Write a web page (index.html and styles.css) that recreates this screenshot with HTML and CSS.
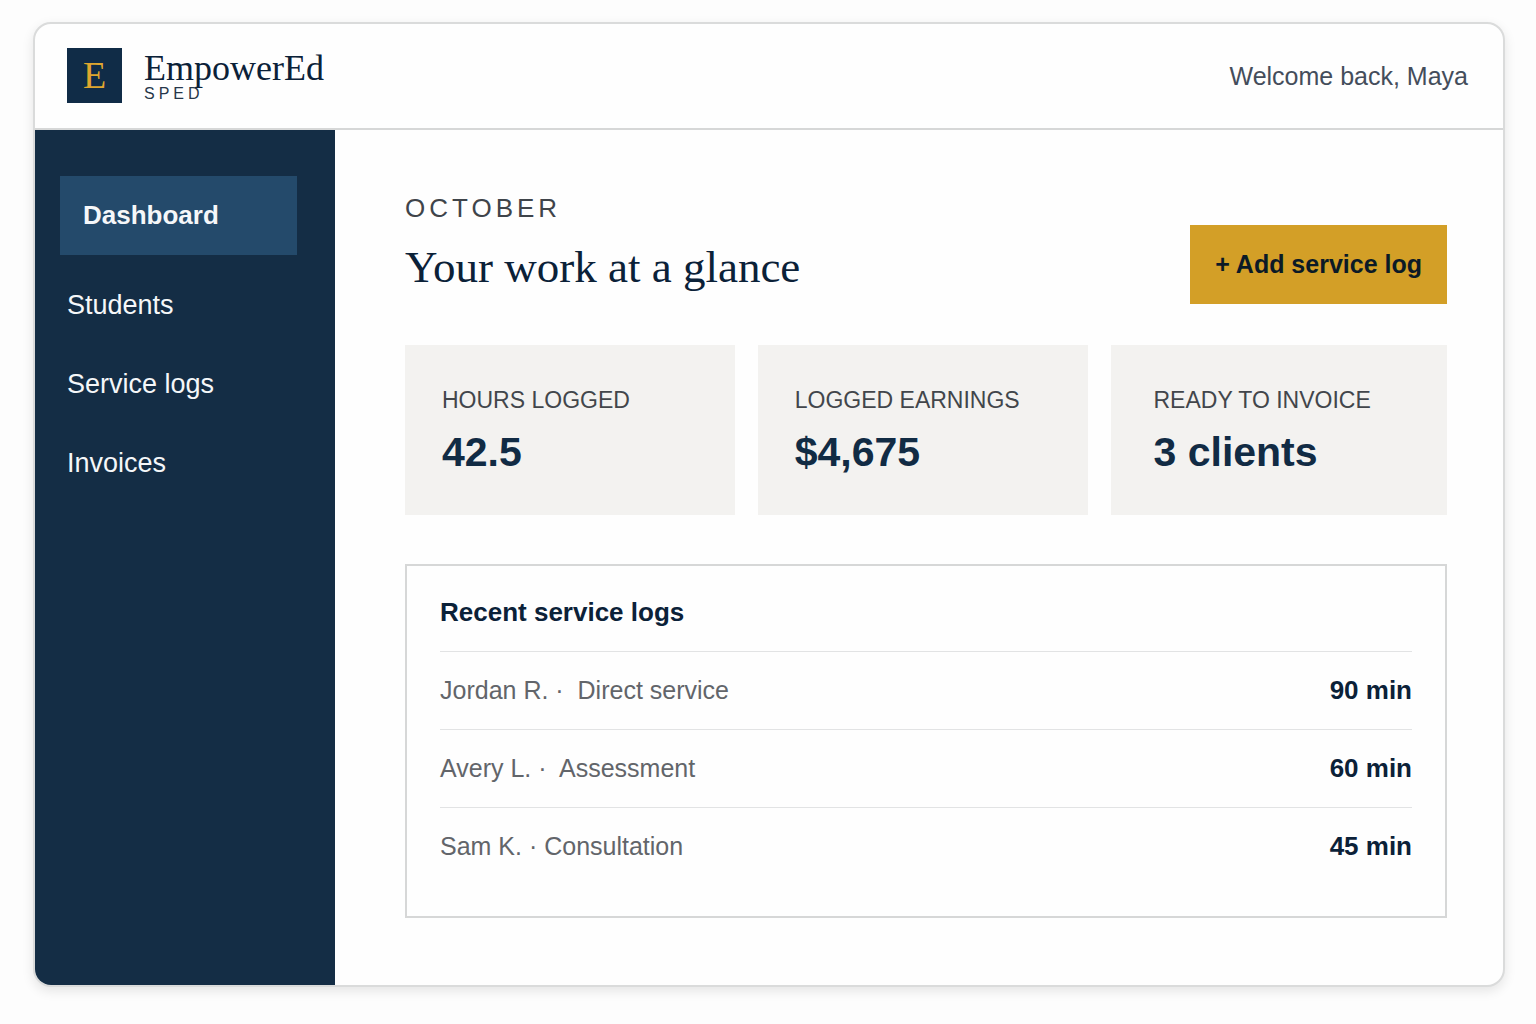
FILE: index.html
```html
<!DOCTYPE html>
<html lang="en">
<head>
    <meta charset="UTF-8">
    <meta name="viewport" content="width=device-width, initial-scale=1.0">
    <title>EmpowerEd SPED - Dashboard</title>
    <link rel="stylesheet" href="styles.css">
</head>
<body>
    <div class="app">
        <header class="header">
            <div class="brand">
                <div class="logo">E</div>
                <div class="brand-text">
                    <span class="brand-name">EmpowerEd</span>
                    <span class="brand-sub">SPED</span>
                </div>
            </div>
            <div class="welcome">Welcome back, Maya</div>
        </header>

        <div class="layout">
            <nav class="sidebar">
                <a class="nav-link active" href="#dashboard">Dashboard</a>
                <a class="nav-link" href="#students">Students</a>
                <a class="nav-link" href="#logs">Service logs</a>
                <a class="nav-link" href="#invoices">Invoices</a>
            </nav>

            <main class="content">
                <div class="page-head">
                    <div>
                        <div class="month">OCTOBER</div>
                        <h1 class="page-title">Your work at a glance</h1>
                    </div>
                    <button class="add-button" type="button">+ Add service log</button>
                </div>

                <div class="stats">
                    <div class="stat">
                        <div class="stat-label">HOURS LOGGED</div>
                        <div class="stat-value">42.5</div>
                    </div>
                    <div class="stat">
                        <div class="stat-label">LOGGED EARNINGS</div>
                        <div class="stat-value">$4,675</div>
                    </div>
                    <div class="stat stat-wide">
                        <div class="stat-label">READY TO INVOICE</div>
                        <div class="stat-value">3 clients</div>
                    </div>
                </div>

                <section class="logs">
                    <h2 class="logs-title">Recent service logs</h2>
                    <table class="logs-table">
                        <tbody>
                            <tr>
                                <td>Jordan R. ·&nbsp; Direct service</td>
                                <td class="minutes">90 min</td>
                            </tr>
                            <tr>
                                <td>Avery L. ·&nbsp; Assessment</td>
                                <td class="minutes">60 min</td>
                            </tr>
                            <tr>
                                <td>Sam K. · Consultation</td>
                                <td class="minutes">45 min</td>
                            </tr>
                        </tbody>
                    </table>
                </section>
            </main>
        </div>
    </div>
</body>
</html>
```

FILE: styles.css
```css
* {
    box-sizing: border-box;
}
body {
    margin: 0;
    min-height: 100vh;
    padding: 22px 31px 37px 33px;
    display: flex;
    background: #fdfdfd;
    color: #0b2138;
    font-family: "Liberation Sans", Arial, sans-serif;
    font-size: 25px;
    line-height: 30px;
}
.app {
    flex: 1;
    display: flex;
    flex-direction: column;
    background: #fefefe;
    border: 2px solid #dadbdb;
    border-radius: 18px;
    overflow: hidden;
    box-shadow: 0 4px 12px rgba(0, 0, 0, 0.1);
}

/* header */
.header {
    display: flex;
    align-items: center;
    justify-content: space-between;
    padding: 24px 35px 25px 32px;
    border-bottom: 2px solid #d6d7d7;
}
.brand {
    display: flex;
    align-items: center;
    gap: 22px;
}
.logo {
    width: 55px;
    height: 55px;
    background: #102c47;
    color: #dfa62f;
    font-family: "Liberation Serif", "Times New Roman", serif;
    font-size: 38px;
    line-height: 55px;
    text-align: center;
}
.brand-text {
    display: flex;
    flex-direction: column;
}
.brand-name {
    font-family: "Liberation Serif", "Times New Roman", serif;
    font-size: 36px;
    line-height: 36px;
}
.brand-sub {
    font-size: 16px;
    line-height: 16px;
    letter-spacing: 4px;
    color: #26364a;
}
.welcome {
    color: #444d5b;
}

/* sidebar */
.layout {
    flex: 1;
    display: flex;
}
.sidebar {
    width: 300px;
    flex-shrink: 0;
    padding: 46px 38px 46px 25px;
    background: #142d45;
}
.nav-link {
    display: block;
    padding: 24px 7px;
    color: #f5f7f9;
    font-size: 27px;
    line-height: 31px;
    text-decoration: none;
}
.nav-link.active {
    margin-bottom: 11px;
    padding: 24px 23px;
    background: #244a6b;
    font-size: 26px;
    font-weight: bold;
}

/* main area */
.content {
    flex: 1;
    padding: 63px 56px 63px 70px;
}
.page-head {
    display: flex;
    align-items: flex-end;
    justify-content: space-between;
    margin-bottom: 41px;
}
.month {
    font-size: 26px;
    letter-spacing: 4px;
    color: #3f444a;
}
.page-title {
    margin: 18px 0 11px;
    font-family: "Liberation Serif", "Times New Roman", serif;
    font-size: 45px;
    font-weight: normal;
    line-height: 52px;
}
.add-button {
    padding: 24px 25px;
    border: none;
    background: #d39f27;
    color: #0b1a26;
    font: bold 25px/31px "Liberation Sans", Arial, sans-serif;
    cursor: pointer;
}
.stats {
    display: grid;
    grid-template-columns: 49fr 49fr 50fr;
    gap: 23px;
    margin-bottom: 49px;
}
.stat {
    padding: 40px 37px 39px;
    background: #f3f2f0;
}
.stat-wide {
    padding-left: 43px;
}
.stat-label {
    font-size: 23px;
    color: #42464b;
    white-space: nowrap;
}
.stat-value {
    margin-top: 13px;
    font-size: 41px;
    font-weight: bold;
    line-height: 48px;
    color: #112b44;
}

/* recent logs */
.logs {
    padding: 31px 33px;
    border: 2px solid #d6d7d7;
}
.logs-title {
    margin: 0 0 24px;
    font-size: 26px;
    line-height: 30px;
}
.logs-table {
    width: 100%;
    border-collapse: collapse;
}
.logs-table td {
    padding: 23px 0 24px;
    border-top: 1px solid #e2e3e4;
    color: #62656a;
}
.logs-table .minutes {
    color: #0b2138;
    font-size: 26px;
    font-weight: bold;
    text-align: right;
}
```
